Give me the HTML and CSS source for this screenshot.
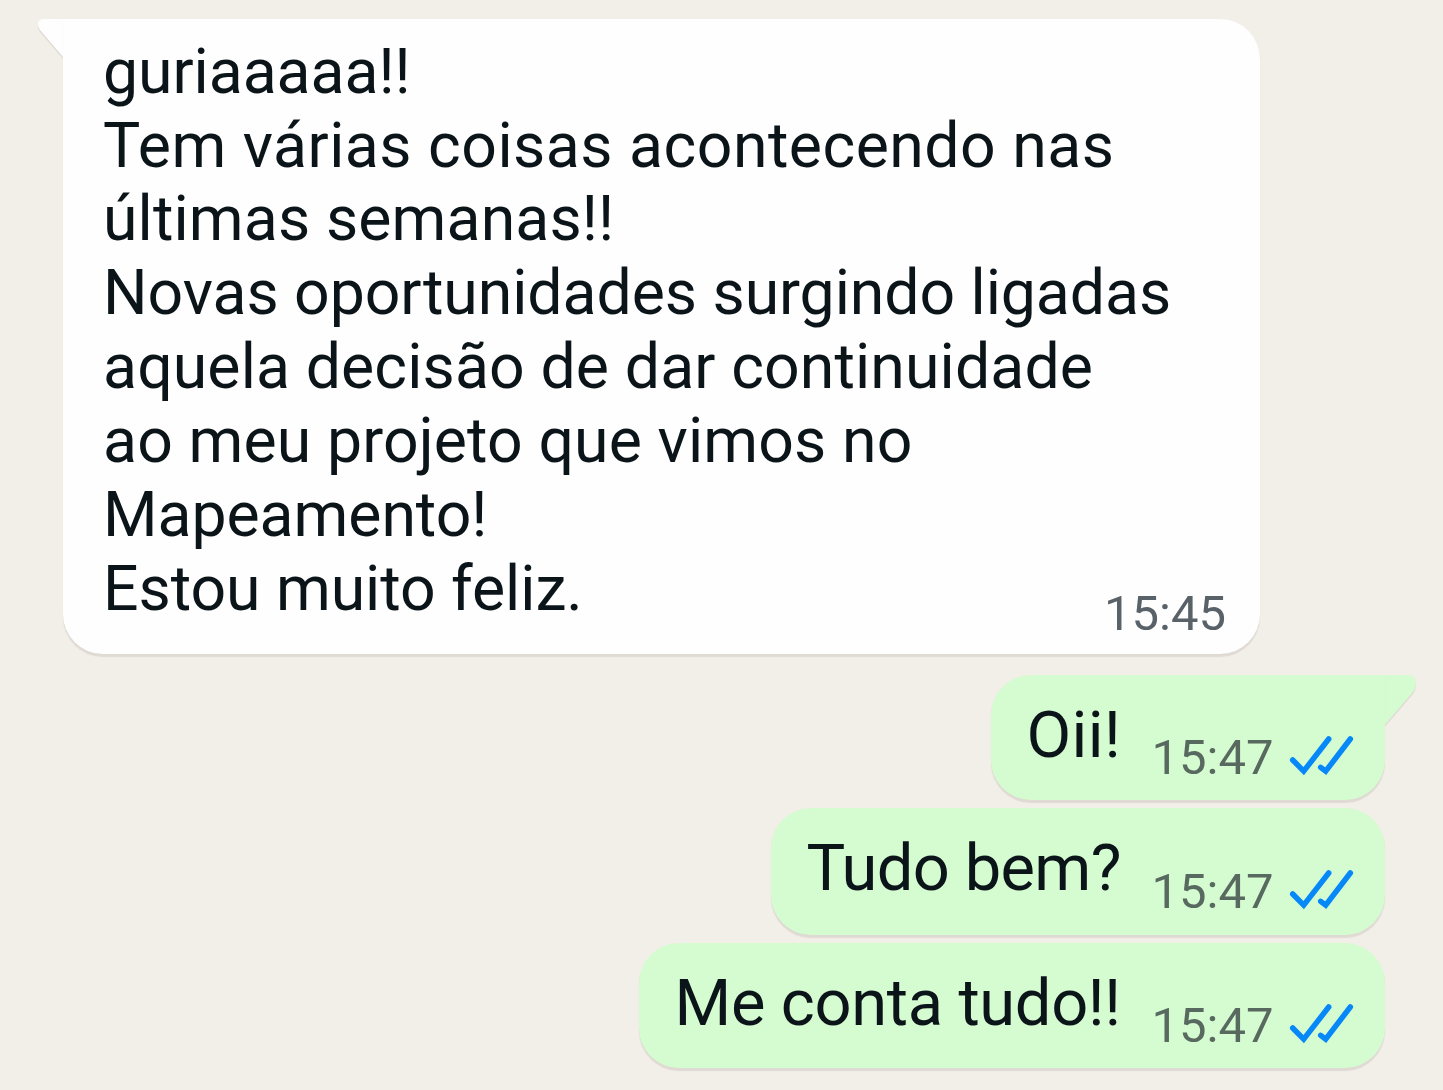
FILE: index.html
```html
<!DOCTYPE html>
<html lang="pt-BR">
<head>
  <meta charset="UTF-8">
  <title>Conversa</title>
  <link rel="stylesheet" href="styles.css">
</head>
<body>

  <svg class="defs">
    <symbol id="checks" viewBox="0 0 66 42">
      <path d="M3.700 25 L14.700 36.200 L39.700 4 M31.700 32.300 L36.700 36.200 L61.300 4" />
    </symbol>
  </svg>

  <main class="chat">
    <div class="bubble received">
      <svg class="tail" viewBox="0 0 28 46"><path d="M28 0 H6 Q0 0 0 5 Q0 8 2 11 L28 41.500 Z" /></svg>
      <p class="text">guriaaaaa!!<br>
        <span class="wide">Tem várias coisas acontecendo nas</span><br>
        <span class="medium">últimas semanas!!</span><br>
        Novas oportunidades surgindo ligadas<br>
        <span class="medium">aquela decisão de dar continuidade</span><br>
        <span class="medium">ao meu projeto que vimos no</span><br>
        Mapeamento!<br>
        Estou muito feliz.</p>
      <span class="time">15:45</span>
    </div>

    <div class="bubble sent first">
      <svg class="tail" viewBox="0 0 34 54"><path d="M0 0 H25 Q33 0 33 8 Q33 13 30 17 L0 52 Z" /></svg>
      <p class="text">Oii!</p>
      <span class="time">15:47</span>
      <svg class="checks"><use href="#checks" /></svg>
    </div>

    <div class="bubble sent second">
      <p class="text">Tudo bem?</p>
      <span class="time">15:47</span>
      <svg class="checks"><use href="#checks" /></svg>
    </div>

    <div class="bubble sent third">
      <p class="text">Me conta tudo!!</p>
      <span class="time">15:47</span>
      <svg class="checks"><use href="#checks" /></svg>
    </div>
  </main>

</body>
</html>
```
FILE: styles.css
```css
* {
  box-sizing: border-box;
}
body {
  margin: 0;
  height: 1090px;
  overflow: hidden;
  background: #f2eee8;
  font-family: Roboto, sans-serif;
}
.defs {
  display: none;
}
.chat {
  display: flex;
  flex-direction: column;
  padding: 18.5px 58px 0 63px;
}
.bubble {
  position: relative;
  display: flex;
  border-radius: 40px;
  box-shadow: 0 2.5px 1px #dfdad3;
}
.text {
  margin: 0;
  color: #0b1418;
  white-space: nowrap;
}
.time {
  font-size: 49px;
  line-height: 50px;
  color: #596269;
}
/* sits behind the bubble so its shadow stays outside */
.tail {
  position: absolute;
  z-index: -1;
  top: 0;
  filter: drop-shadow(0 2px 0.5px #dfdad3);
}
.received {
  align-self: flex-start;
  align-items: flex-end;
  width: 1197px;
  height: 635px;
  padding: 16.200px 34px 15px 40px;
  background: #fefefe;
  border-top-left-radius: 0;
}
.received .text {
  flex: 1;
  min-width: 0;
  align-self: flex-start;
  font-size: 62.500px;
  line-height: 73.850px;
  letter-spacing: -0.050px;
}
.received .time {
  margin-left: -120px;
}
.received .wide {
  letter-spacing: 0.490px;
}
.received .medium {
  letter-spacing: 0.130px;
}
.received .tail {
  left: -25px;
  width: 28px;
  height: 46px;
  fill: #fefefe;
}
.sent {
  align-self: flex-end;
  height: 125px;
  padding: 22px 30px 0 35.500px;
  background: #d5fbd0;
}
.sent .text {
  flex: 1;
  font-size: 65px;
  line-height: 76px;
  letter-spacing: -0.350px;
}
.sent .time {
  width: 120px;
  margin: 36px 17.500px 0 0;
  color: #58695f;
}
.sent .tail {
  left: 392px;
  width: 34px;
  height: 54px;
  fill: #d5fbd0;
}
.first {
  width: 394px;
  margin-top: 21.500px;
  border-top-right-radius: 0;
}
.first .text {
  letter-spacing: 0.400px;
}
.second {
  width: 614px;
  height: 127px;
  margin-top: 7.500px;
}
.second .text {
  letter-spacing: -0.650px;
}
.second .time {
  margin-top: 37px;
}
.third {
  width: 746px;
  margin-top: 8px;
}
.checks {
  width: 66px;
  height: 42px;
  margin-top: 38px;
  fill: none;
  stroke: #0788f8;
  stroke-width: 5.500px;
  stroke-linecap: round;
}
.second .checks {
  margin-top: 39px;
}
```
